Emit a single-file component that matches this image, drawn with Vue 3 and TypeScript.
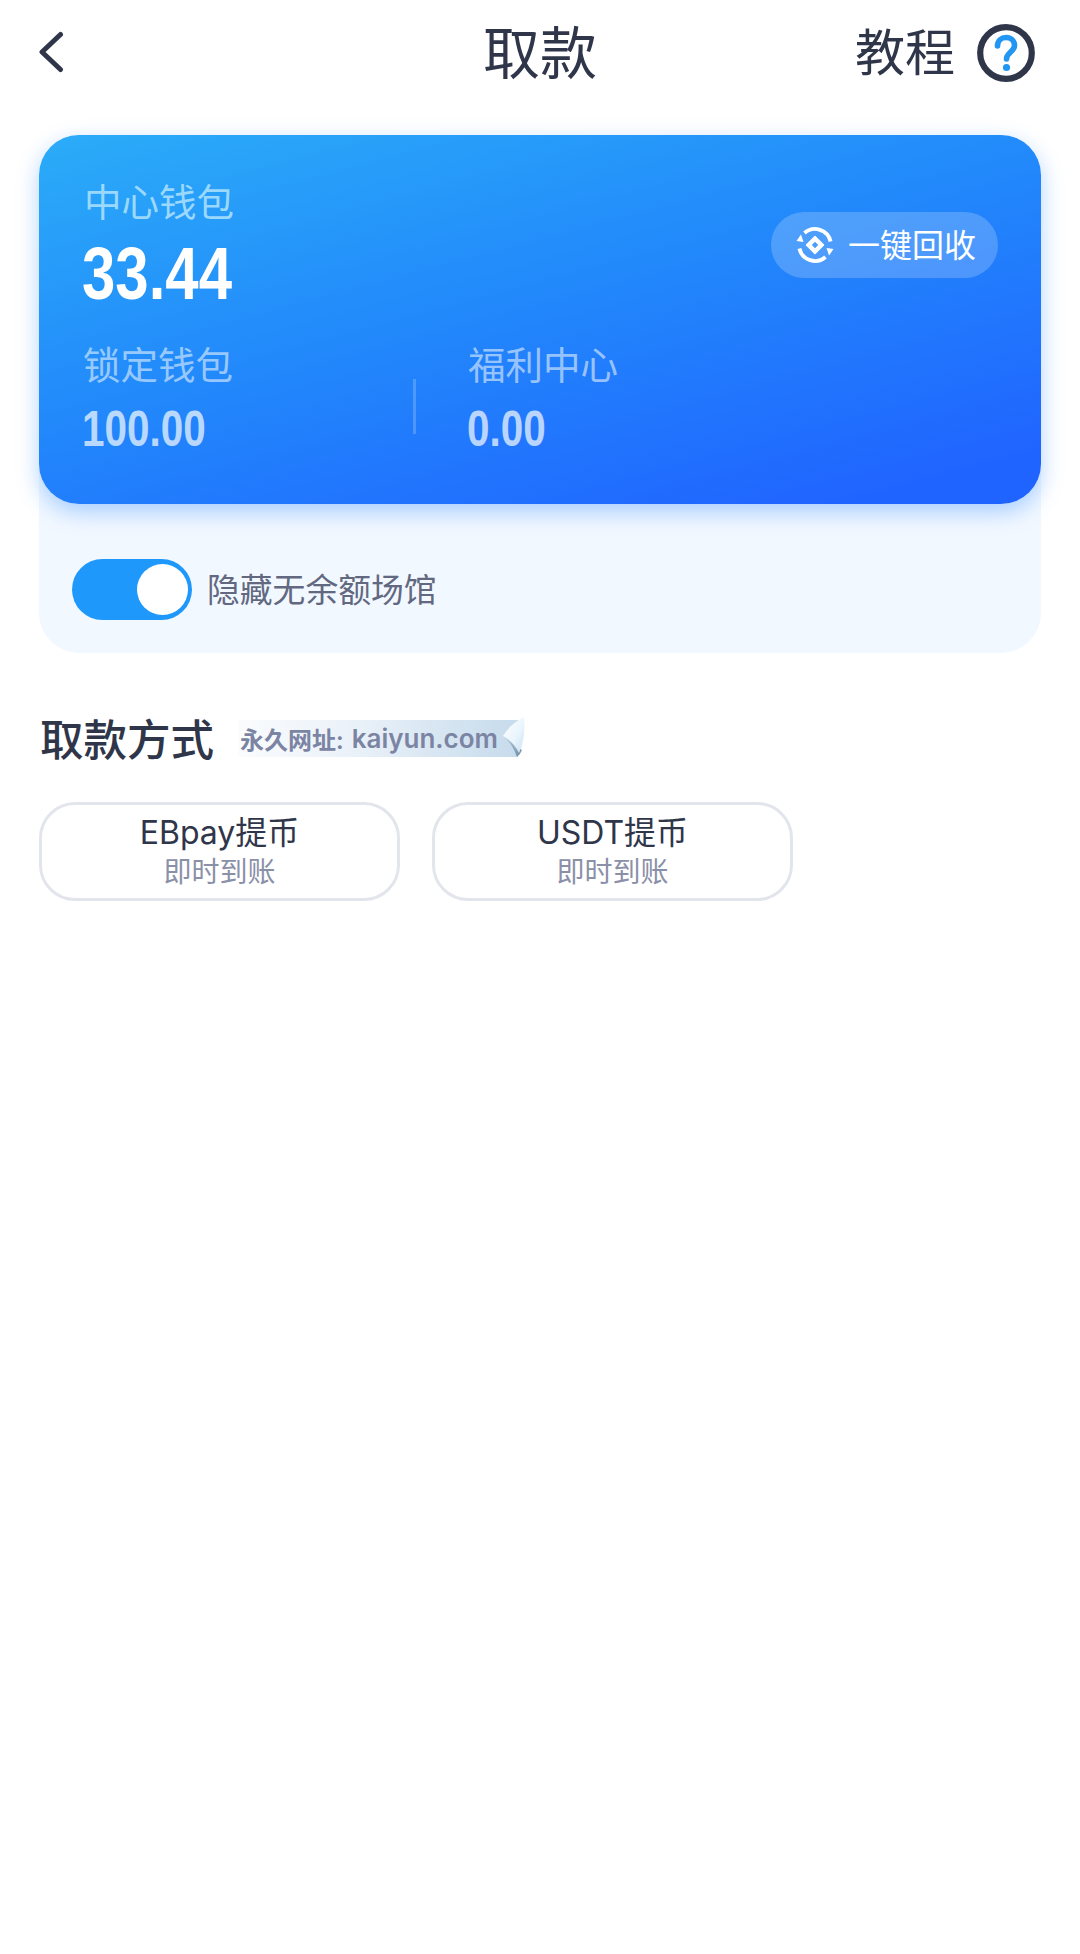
<script setup lang="ts">
import { ref } from 'vue'

type Method = {
  name: string
  note: string
}

const hideEmpty = ref(true)

const methods: Method[] = [
  { name: 'EBpay提币', note: '即时到账' },
  { name: 'USDT提币', note: '即时到账' }
]
</script>

<template>
  <div class="page">
    <header class="top">
      <button class="back" aria-label="返回">
        <svg width="26" height="42" viewBox="0 0 26 42">
          <path d="M22.5 3.5 L4 21 L22.5 38.5" fill="none" stroke="#30364a" stroke-width="5" stroke-linecap="round" stroke-linejoin="round" />
        </svg>
      </button>
      <h1>取款</h1>
      <div class="help">
        <span>教程</span>
        <svg width="58" height="58" viewBox="0 0 58 58">
          <circle cx="29" cy="29" r="25.8" fill="#fff" stroke="#30364a" stroke-width="6.2" />
          <path d="M20.5 22 C20.5 16.5 24.5 13.5 29 13.5 C34 13.5 37.5 17 37.5 21.5 C37.5 27.5 29.5 28.5 29.5 35" fill="none" stroke="#2196f3" stroke-width="5.6" stroke-linecap="round" />
          <circle cx="29.5" cy="43.5" r="3.6" fill="#2196f3" />
        </svg>
      </div>
    </header>

    <section class="panel">
      <div class="wallet">
        <div class="main-row">
          <div>
            <div class="label">中心钱包</div>
            <div class="amount"><span>33.44</span></div>
          </div>
          <button class="recall">
            <svg width="38" height="38" viewBox="0 0 38 38">
              <path d="M8.5 7 A16 16 0 0 1 34.6 15.5" fill="none" stroke="#fff" stroke-width="3.8" />
              <path d="M29.5 31 A16 16 0 0 1 3.4 22.5" fill="none" stroke="#fff" stroke-width="3.8" />
              <path d="M30.5 22 L37.5 23 L33 29.5 Z" fill="#fff" />
              <path d="M7.5 16 L0.5 15 L5 8.5 Z" fill="#fff" />
              <path d="M19 10.5 L27.5 19 L19 27.5 L10.5 19 Z" fill="#fff" stroke="#fff" stroke-width="1.5" stroke-linejoin="round" />
              <path d="M19 15.8 L22.2 19 L19 22.2 L15.8 19 Z" fill="#4a9bfb" />
            </svg>
            <span class="recall-text">一键回收</span>
          </button>
        </div>
        <div class="stats">
          <div class="stat">
            <div class="label">锁定钱包</div>
            <div class="value"><span>100.00</span></div>
          </div>
          <i class="divider"></i>
          <div class="stat">
            <div class="label">福利中心</div>
            <div class="value"><span>0.00</span></div>
          </div>
        </div>
      </div>
      <label class="toggle-row">
        <span class="toggle" :class="{ on: hideEmpty }" @click.prevent="hideEmpty = !hideEmpty"><i></i></span>
        <span class="toggle-text">隐藏无余额场馆</span>
      </label>
    </section>

    <div class="section-head">
      <h2>取款方式</h2>
      <div class="ribbon">
        <span class="cn">永久网址:</span>
        <span class="url">kaiyun.com</span>
        <svg class="curl" width="26" height="46" viewBox="0 0 26 46">
          <defs>
            <linearGradient id="curlFill" x1="0" y1="0" x2="1" y2="1">
              <stop offset="0" stop-color="#ffffff" />
              <stop offset="0.6" stop-color="#e8f4fc" />
              <stop offset="1" stop-color="#c3e0f5" />
            </linearGradient>
            <linearGradient id="curlShade" x1="0" y1="0" x2="1" y2="1">
              <stop offset="0" stop-color="#c3d3e2" />
              <stop offset="1" stop-color="#6f8aa4" />
            </linearGradient>
          </defs>
          <path d="M3 22 Q12 29 17 43 Q20 41 22 36 Z" fill="url(#curlShade)" />
          <path d="M24 3 Q10 10 3 22 Q13 27 19 39 Q26 24 24 3 Z" fill="url(#curlFill)" />
        </svg>
      </div>
    </div>

    <div class="methods">
      <button v-for="m in methods" :key="m.name" class="method">
        <span class="name">{{ m.name }}</span>
        <span class="note">{{ m.note }}</span>
      </button>
    </div>
  </div>
</template>

<style scoped>
.page {
  width: 1080px;
  height: 1954px;
  background: #fff;
  font-family: "Inter", "Noto Sans CJK SC", sans-serif;
  color: #30364a;
  overflow: hidden;
}

button {
  font-family: inherit;
  border: 0;
  background: none;
  padding: 0;
}

.top {
  display: grid;
  grid-template-columns: 1fr auto 1fr;
  align-items: center;
  height: 135px;
  padding: 0 46px 27px 46px;
  box-sizing: border-box;
}

.back {
  justify-self: start;
  display: flex;
  margin: -4px 0 0 -8px;
}

h1 {
  margin: 0;
  font-size: 57px;
  font-weight: 400;
  line-height: 70px;
}

.help {
  justify-self: end;
  display: flex;
  align-items: center;
  gap: 22px;
  margin: -2px -1px 0 0;
  font-size: 50px;
  line-height: 60px;
}

.panel {
  margin: 0 39px;
  height: 518px;
  background: #f2f8ff;
  border-radius: 40px;
}

.wallet {
  height: 369px;
  box-sizing: border-box;
  padding: 43px 43px 0 45px;
  border-radius: 40px;
  background: linear-gradient(165deg, #2bacf8 0%, #2289fb 45%, #2064ff 92%);
  box-shadow: 0 8px 22px rgba(30, 130, 255, 0.35);
}

.main-row {
  display: flex;
  justify-content: space-between;
  align-items: center;
}

.label {
  font-size: 37.5px;
  line-height: 50px;
  color: #9bd8fd;
}

.stat .label {
  margin-left: -1px;
  color: rgba(255, 255, 255, 0.55);
}

.amount {
  margin-top: 1px;
  font-family: "Liberation Sans", sans-serif;
  font-size: 74px;
  font-weight: 700;
  line-height: 90px;
  color: #fff;
}

.amount span,
.value span {
  display: inline-block;
  transform: scaleX(0.81);
  transform-origin: left center;
}

.amount span {
  margin-left: -2px;
}

.recall {
  display: flex;
  align-items: center;
  gap: 14px;
  height: 66px;
  padding: 0 22px 0 25px;
  margin-top: -8px;
  border-radius: 33px;
  background: rgba(255, 255, 255, 0.2);
  color: #fff;
  font-size: 32px;
}

.recall-text {
  margin-top: -4px;
}

.stats {
  display: flex;
  align-items: flex-end;
  margin-top: 22px;
}

.stat {
  width: 329px;
}

.stat + .divider + .stat {
  margin-left: 53px;
}

.value {
  margin-top: 8px;
  font-family: "Liberation Sans", sans-serif;
  font-size: 50px;
  font-weight: 700;
  line-height: 60px;
  color: rgba(255, 255, 255, 0.7);
}

.value span {
  margin-left: -2px;
}

.divider {
  width: 3px;
  height: 55px;
  margin-bottom: 25px;
  background: rgba(255, 255, 255, 0.2);
}

.toggle-row {
  display: flex;
  align-items: center;
  gap: 15px;
  margin: 54px 0 0 33px;
  font-size: 32.8px;
  line-height: 60px;
  color: #62687f;
}

.toggle-text {
  margin-top: 2px;
}

.toggle {
  display: flex;
  justify-content: flex-start;
  width: 120px;
  height: 61px;
  box-sizing: border-box;
  padding: 5px 4px 5px 5px;
  border-radius: 31px;
  background: #d5d9e3;
}

.toggle.on {
  justify-content: flex-end;
  background: #1f98fb;
}

.toggle i {
  width: 51px;
  height: 51px;
  border-radius: 50%;
  background: #fff;
}

.section-head {
  display: flex;
  align-items: center;
  gap: 24px;
  margin: 62px 39px 0 40px;
  height: 50px;
}

h2 {
  margin: 0;
  font-size: 43.5px;
  font-weight: 500;
  line-height: 50px;
}

.ribbon {
  position: relative;
  display: flex;
  align-items: center;
  gap: 8px;
  width: 280px;
  height: 37px;
  margin-top: -3px;
  box-sizing: border-box;
  padding-left: 2px;
  color: #7b84a3;
  background: linear-gradient(90deg, rgba(232, 240, 248, 0.2) 0%, #e8f0f8 45%, #c6dbec 100%);
  font-weight: 600;
}

.cn {
  font-size: 24px;
}

.url {
  font-size: 26px;
}

.curl {
  position: absolute;
  left: 262px;
  top: -6px;
}

.methods {
  display: flex;
  gap: 32px;
  margin: 37px 0 0 39px;
}

.method {
  display: flex;
  flex-direction: column;
  align-items: center;
  justify-content: center;
  width: 361px;
  height: 99px;
  box-sizing: border-box;
  border: 3px solid #e3e5ec;
  border-radius: 36px;
  background: #fff;
}

.name {
  font-size: 32px;
  line-height: 40px;
  margin-top: 1px;
  color: #30364a;
}

.note {
  font-size: 28px;
  line-height: 39px;
  color: #8a90a8;
}
</style>
